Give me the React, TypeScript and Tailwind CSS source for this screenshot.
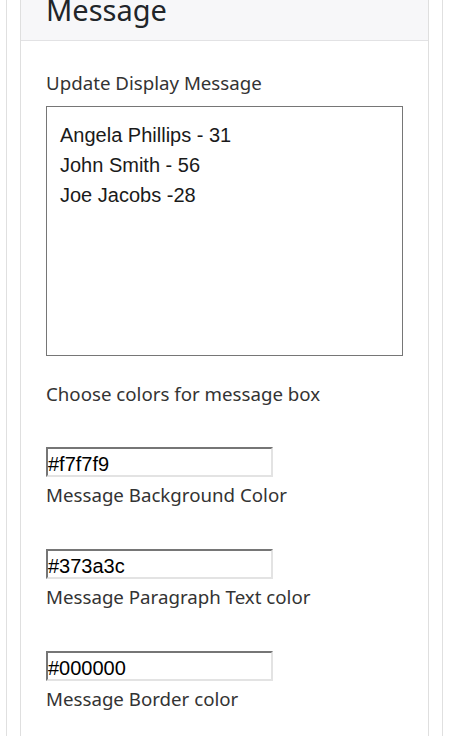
import React from "react";

const labelCls =
  "block text-[18.7px] leading-[28px] text-[#333333] [font-family:'Noto_Sans','Open_Sans',sans-serif]";

function ColorField({ value, label }: { value: string; label: string }) {
  return (
    <div className="flex flex-col items-start">
      <div className="w-[227px] h-[30px] border-2 border-t-[#767676] border-l-[#767676] border-b-[#e3e3e3] border-r-[#e3e3e3] bg-white flex items-end">
        <span className="text-[20px] leading-[21px] text-black [font-family:'Liberation_Sans',Arial,sans-serif]">
          {value}
        </span>
      </div>
      <span className={labelCls + " mt-[4px]"}>{label}</span>
    </div>
  );
}

export default function App() {
  return (
    <div className="w-[451px] h-[736px] bg-white overflow-hidden pl-[6px]">
      <div className="w-[437px] h-full border-x border-[#e0e0e0] px-[13px]">
        <div className="w-[409px] h-full border-x border-[#dfdfdf] flex flex-col">
          <div className="h-[41px] bg-[#f7f7f9] border-b border-[#e2e2e4] px-[25px] overflow-hidden">
            <div className="mt-[-6px] text-[29px] leading-[32px] text-[#212529] [font-family:'Noto_Sans','Open_Sans',sans-serif]">
              Message
            </div>
          </div>
          <div className="px-[25px] pt-[28px] flex flex-col">
            <span className={labelCls}>Update Display Message</span>
            <div className="mt-[9px] w-[357px] h-[250px] border border-[#767676] pl-[13px] pt-[13px] text-[20px] leading-[30px] text-[#1a1a1a] [font-family:'Liberation_Sans',Arial,sans-serif]">
              <div>Angela Phillips - 31</div>
              <div>John Smith - 56</div>
              <div>Joe Jacobs -28</div>
            </div>
            <span className={labelCls + " mt-[24px]"}>Choose colors for message box</span>
            <div className="mt-[39px] flex flex-col gap-[40px]">
              <ColorField value="#f7f7f9" label="Message Background Color" />
              <ColorField value="#373a3c" label="Message Paragraph Text color" />
              <ColorField value="#000000" label="Message Border color" />
            </div>
          </div>
        </div>
      </div>
    </div>
  );
}
